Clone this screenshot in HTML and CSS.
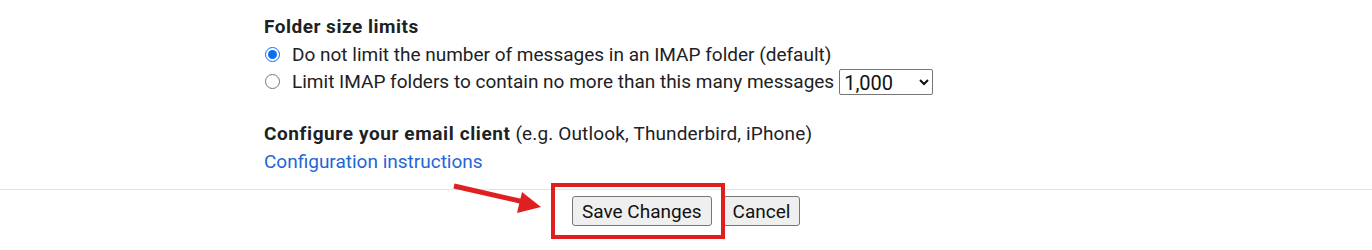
FILE: index.html
```html
<!DOCTYPE html>
<html>
<head>
<meta charset="utf-8">
<link rel="stylesheet" href="styles.css">
</head>
<body>
<div class="content">
  <div class="title">Folder size limits</div>
  <label class="opt"><input type="radio" name="lim" checked> <span>Do not limit the number of messages in an IMAP folder (default)</span></label>
  <label class="opt"><input type="radio" name="lim"> <span>Limit IMAP folders to contain no more than this many messages</span>
    <select class="sel"><option>1,000</option></select></label>
  <div class="config"><b>Configure your email client</b> (e.g. Outlook, Thunderbird, iPhone)</div>
  <a class="link" href="#">Configuration instructions</a>
</div>
<div class="actions">
  <button class="btn">Save Changes</button>
  <button class="btn">Cancel</button>
  <div class="highlight"></div>
  <svg class="arrow" width="100" height="40" viewBox="0 0 100 40">
    <line x1="4" y1="4" x2="74" y2="20" stroke="#e02020" stroke-width="5"/>
    <polygon points="72,10 91,25 67,31" fill="#e02020"/>
  </svg>
</div>
</body>
</html>
```
FILE: styles.css
```css
html, body { margin: 0; padding: 0; background: #fff; }
body {
  font-family: Roboto, "Noto Sans", sans-serif;
  color: #202124;
  font-size: 19px;
}
.content {
  padding: 13px 0 0 264px;
  height: 190px;
  box-sizing: border-box;
  border-bottom: 1px solid #e3e3e3;
}
.title { font-weight: bold; line-height: 28px; letter-spacing: 0.5px; }
.opt { display: flex; align-items: center; line-height: 27px; height: 27px; }
.opt input { margin: 0 12px 0 1px; width: 15px; height: 15px; accent-color: #0b6ef2; }
.sel {
  margin-left: 5px;
  font-family: Roboto, sans-serif;
  font-size: 20px;
  height: 26px;
  width: 94px;
  border: 1px solid #767676;
  border-radius: 2px;
  background: #fff;
  color: #111;
}
.config { margin-top: 25px; line-height: 28px; letter-spacing: 0.15px; }
.config b { font-weight: bold; letter-spacing: 0.6px; }
.link { display: block; color: #1f66d8; text-decoration: none; line-height: 28px; }
.actions {
  position: relative;
  display: flex;
  gap: 11px;
  padding: 6px 0 0 572px;
  height: 54px;
}
.btn {
  font-family: Roboto, sans-serif;
  font-size: 19px;
  color: #111;
  height: 30px;
  padding: 0 9px;
  background: #efefef;
  border: 1px solid #767676;
  border-radius: 3px;
}
.highlight {
  position: absolute;
  left: 551px;
  top: -7px;
  width: 166px;
  height: 48px;
  border: 4px solid #e01e1e;
}
.arrow { position: absolute; left: 450px; top: -8px; }
```
